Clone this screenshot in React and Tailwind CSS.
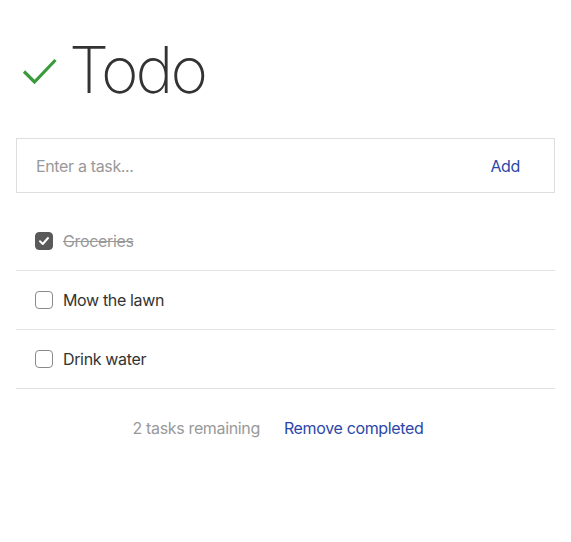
import { useState } from 'react';

const initialTasks = [
    { id: 1, text: 'Groceries', done: true },
    { id: 2, text: 'Mow the lawn', done: false },
    { id: 3, text: 'Drink water', done: false },
];

function Checkbox({ checked, onChange }) {
    return (
        <button
            type="button"
            onClick={onChange}
            className={`w-[18px] h-[18px] rounded-[4px] flex items-center justify-center shrink-0 ${checked
                ? 'bg-[#5a5a5a] border border-[#5a5a5a]'
                : 'bg-white border border-[#8a8a8a]'
                }`}
        >
            {checked && (
                <svg width="12" height="12" viewBox="0 0 12 12" fill="none">
                    <path d="M2 6.3 L4.8 9 L10 3" stroke="white" strokeWidth="2" strokeLinecap="round" strokeLinejoin="round" />
                </svg>
            )}
        </button>
    );
}

export default function App() {
    const [tasks, setTasks] = useState(initialTasks);
    const [text, setText] = useState('');

    const addTask = (e) => {
        e.preventDefault();
        if (!text.trim()) return;
        setTasks(prev => [...prev, { id: Date.now(), text: text.trim(), done: false }]);
        setText('');
    };

    const toggle = (id) => {
        setTasks(prev => prev.map(t => (t.id === id ? { ...t, done: !t.done } : t)));
    };

    const remaining = tasks.filter(t => !t.done).length;

    return (
        <div className="min-h-[542px] bg-white px-4 pt-[30px] font-['Inter',sans-serif] text-[#333] tracking-[-0.35px]">
            {/* Header */}
            <div className="flex items-center h-[80px]">
                <svg width="36" height="28" viewBox="0 0 36 28" className="ml-[6px] mr-[11px] mt-[2px]">
                    <path d="M2 14.5 L12.5 25 L33.5 3" stroke="#3a9b3c" strokeWidth="3.2" fill="none" />
                </svg>
                <h1 className="text-[64px] font-extralight leading-none tracking-[-3px] text-[#333]">Todo</h1>
            </div>

            {/* Input */}
            <form onSubmit={addTask} className="mt-[28px] flex items-center h-[55px] border border-[#dedede] pl-[19px] pr-[34px]">
                <input
                    type="text"
                    value={text}
                    onChange={(e) => setText(e.target.value)}
                    placeholder="Enter a task..."
                    className="flex-1 outline-none text-[16px] text-[#333] placeholder-[#999] tracking-[-0.35px]"
                />
                <button type="submit" className="text-[16px] text-[#2b47a8]">Add</button>
            </form>

            {/* List */}
            <ul className="mt-[19px]">
                {tasks.map(task => (
                    <li key={task.id} className="flex items-center gap-[10px] h-[59px] pl-[19px] border-b border-[#e2e2e2]">
                        <Checkbox checked={task.done} onChange={() => toggle(task.id)} />
                        <span className={`text-[16px] ${task.done ? 'line-through text-[#999]' : 'text-[#333]'}`}>
                            {task.text}
                        </span>
                    </li>
                ))}
            </ul>

            {/* Footer */}
            <div className="flex justify-center items-center gap-[24px] pt-[27px] pr-[15px] text-[16px]">
                <span className="text-[#999]">{remaining} tasks remaining</span>
                <button
                    type="button"
                    onClick={() => setTasks(prev => prev.filter(t => !t.done))}
                    className="text-[#2b47a8]"
                >
                    Remove completed
                </button>
            </div>
        </div>
    );
}
